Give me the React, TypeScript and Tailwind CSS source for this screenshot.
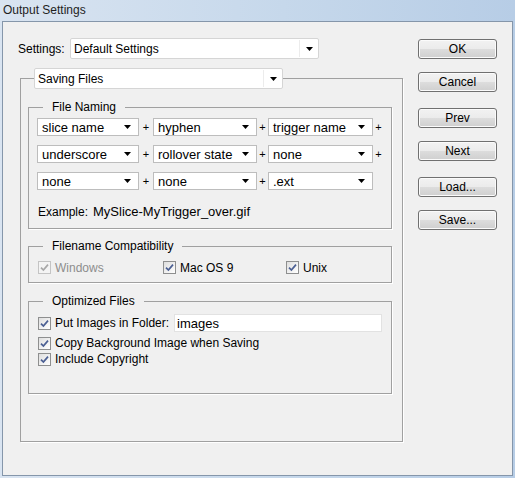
import React from 'react';

// Win7 style dropdown (combobox) with separate arrow area
const Arrow = () => (
  <svg width="7" height="4" viewBox="0 0 7 4" className="shrink-0">
    <polygon points="0,0 7,0 3.5,4" fill="#000" />
  </svg>
);

const ComboBox: React.FC<{ value: string }> = ({ value }) => (
  <div className="flex h-[21px] w-[249px] rounded-[2px] border border-[#d5d5d5] bg-white">
    <div className="m-[1px] mr-0 flex flex-1 items-center border-r border-[#ececec] pl-[2px] text-[12px] leading-none">
      {value}
    </div>
    <div className="flex w-[18px] items-center justify-center">
      <Arrow />
    </div>
  </div>
);

// classic dropdown used in the naming rows
const NameSelect: React.FC<{ value: string; width: string }> = ({ value, width }) => (
  <div
    className={`flex h-[18px] ${width} items-center justify-between border border-[#bdbdbd] bg-white pl-[4px] pr-[7px] font-['Liberation_Sans',Arial,sans-serif] text-[13px] leading-none`}
  >
    <span>{value}</span>
    <Arrow />
  </div>
);

const Plus: React.FC<{ width: string }> = ({ width }) => (
  <span className={`${width} text-center text-[11px] leading-none`}>+</span>
);

const CheckBox: React.FC<{ disabled?: boolean }> = ({ disabled }) => (
  <span
    className={`flex h-[13px] w-[13px] shrink-0 items-center justify-center border ${
      disabled ? 'border-[#c4c4c4] bg-[#f4f4f4]' : 'border-[#8e8f8f] bg-[linear-gradient(135deg,#dedede,#ffffff)]'
    }`}
  >
    <svg width="9" height="9" viewBox="0 0 9 9">
      <path
        d="M1 4.6 L3.4 7 L8 1.6"
        fill="none"
        stroke={disabled ? '#a8a8a8' : '#4b5f93'}
        strokeWidth="1.7"
      />
    </svg>
  </span>
);

const Button: React.FC<{ label: string; className?: string }> = ({ label, className = '' }) => (
  <button
    className={`h-[20px] w-[79px] rounded-[3px] border border-[#707070] bg-[linear-gradient(#f2f2f2,#ebebeb_50%,#dddddd_50%,#cfcfcf)] text-[12px] leading-none text-black shadow-[inset_0_0_0_1px_#fbfbfb] ${className}`}
  >
    {label}
  </button>
);

const Legend: React.FC<{ children: React.ReactNode }> = ({ children }) => (
  <legend className="ml-[14px] px-[9px] text-[12px] leading-[15px]">{children}</legend>
);

export default function App() {
  return (
    <div className="flex h-[478px] w-[515px] flex-col bg-[linear-gradient(90deg,#d9e4f1,#c6d8eb_55%,#b7cde6)] font-['Liberation_Sans',Arial,sans-serif] text-black">
      {/* title bar */}
      <div className="flex h-[21px] items-center pb-[2px] pl-[3px] text-[12px] text-[#1e1e1e]">Output Settings</div>

      {/* client area */}
      <div className="mx-[2px] mb-[2px] flex flex-1 border border-[#8596aa] bg-[#f0f0f0]">
        {/* left column */}
        <div className="w-[400px] pl-[15px] pt-[16px]">
          <div className="flex h-[21px] items-center">
            <span className="w-[52px] text-[12px] leading-none">Settings:</span>
            <ComboBox value="Default Settings" />
          </div>

          <fieldset className="ml-[2px] mt-[9px] w-[383px] border border-[#a0a0a0] shadow-[1px_1px_0_#ffffff]">
            <legend className="ml-[13px]">
              <ComboBox value="Saving Files" />
            </legend>

            <div className="pb-[47px] pl-[7px]">
              {/* File Naming */}
              <fieldset className="mt-[11px] w-[364px] border border-[#a0a0a0] shadow-[1px_1px_0_#ffffff]">
                <Legend>File Naming</Legend>
                <div className="pb-[9px] pl-[8px] pt-[3px]">
                  <div className="flex flex-col gap-[9px]">
                    <div className="flex items-center">
                      <NameSelect value="slice name" width="w-[102px]" />
                      <Plus width="w-[14px]" />
                      <NameSelect value="hyphen" width="w-[104px]" />
                      <Plus width="w-[11px]" />
                      <NameSelect value="trigger name" width="w-[105px]" />
                      <Plus width="w-[11px]" />
                    </div>
                    <div className="flex items-center">
                      <NameSelect value="underscore" width="w-[102px]" />
                      <Plus width="w-[14px]" />
                      <NameSelect value="rollover state" width="w-[104px]" />
                      <Plus width="w-[11px]" />
                      <NameSelect value="none" width="w-[105px]" />
                      <Plus width="w-[11px]" />
                    </div>
                    <div className="flex items-center">
                      <NameSelect value="none" width="w-[102px]" />
                      <Plus width="w-[14px]" />
                      <NameSelect value="none" width="w-[104px]" />
                      <Plus width="w-[11px]" />
                      <NameSelect value=".ext" width="w-[105px]" />
                    </div>
                  </div>
                  <div className="mt-[14px] flex h-[15px] items-center pl-[1px]">
                    <span className="text-[12px] leading-none">Example:</span>
                    <span className="ml-[5px] text-[13px] leading-none">MySlice-MyTrigger_over.gif</span>
                  </div>
                </div>
              </fieldset>

              {/* Filename Compatibility */}
              <fieldset className="mt-[10px] w-[364px] border border-[#a0a0a0] shadow-[1px_1px_0_#ffffff]">
                <Legend>Filename Compatibility</Legend>
                <div className="flex h-[15px] box-content items-center pb-[7px] pl-[9px] pt-[6px] text-[12px] leading-none">
                  <label className="flex w-[125px] items-center gap-[4px] text-[#8d8d8d]">
                    <CheckBox disabled />
                    Windows
                  </label>
                  <label className="flex w-[123px] items-center gap-[4px]">
                    <CheckBox />
                    Mac OS 9
                  </label>
                  <label className="flex items-center gap-[4px]">
                    <CheckBox />
                    Unix
                  </label>
                </div>
              </fieldset>

              {/* Optimized Files */}
              <fieldset className="mt-[11px] w-[364px] border border-[#a0a0a0] shadow-[1px_1px_0_#ffffff]">
                <Legend>Optimized Files</Legend>
                <div className="pb-[26px] pl-[9px] pt-[5px]">
                  <div className="flex h-[18px] items-center text-[12px] leading-none">
                    <label className="flex w-[136px] items-center gap-[4px]">
                      <CheckBox />
                      Put Images in Folder:
                    </label>
                    <div className="flex h-[18px] w-[208px] items-center border border-[#e2e2e2] bg-white pl-[2px] text-[13px]">
                      images
                    </div>
                  </div>
                  <label className="mt-[3px] flex h-[16px] items-center gap-[4px] text-[12px] leading-none">
                    <CheckBox />
                    Copy Background Image when Saving
                  </label>
                  <label className="flex h-[16px] items-center gap-[4px] text-[12px] leading-none">
                    <CheckBox />
                    Include Copyright
                  </label>
                </div>
              </fieldset>
            </div>
          </fieldset>
        </div>

        {/* right column: buttons */}
        <div className="flex flex-col pl-[15px] pt-[17px]">
          <Button label="OK" />
          <Button label="Cancel" className="mt-[13px]" />
          <Button label="Prev" className="mt-[16px]" />
          <Button label="Next" className="mt-[13px]" />
          <Button label="Load..." className="mt-[16px]" />
          <Button label="Save..." className="mt-[13px]" />
        </div>
      </div>
    </div>
  );
}
